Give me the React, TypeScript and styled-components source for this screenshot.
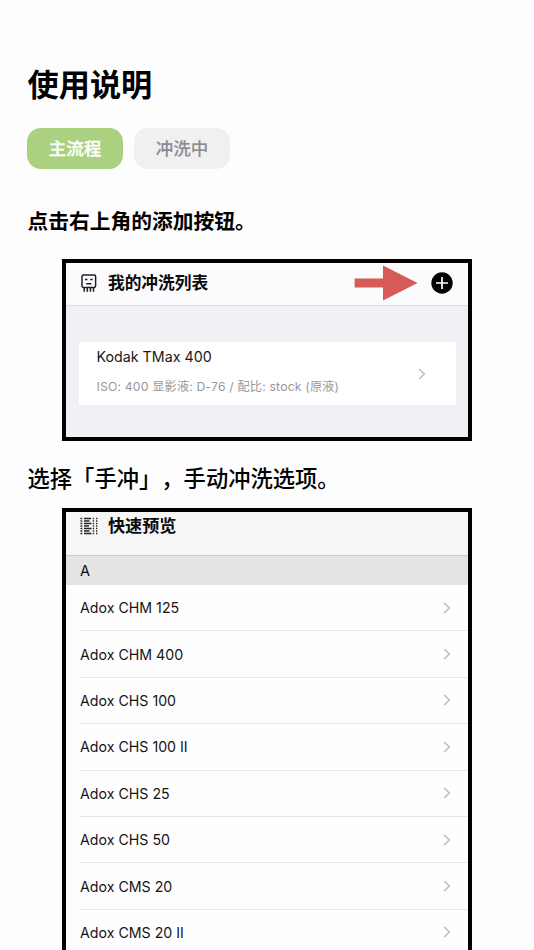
import React from "react";
import styled, { createGlobalStyle } from "styled-components";

const GlobalStyle = createGlobalStyle`
  * { box-sizing: border-box; }
  body {
    margin: 0;
    background: #fdfdfd;
    color: #0b0b0b;
    font-family: Inter, "Noto Sans CJK SC", sans-serif;
    text-spacing-trim: space-all;
    overflow: hidden;
  }
`;

const Page = styled.main`
  height: 950px;
  overflow: hidden;
  display: flex;
  flex-direction: column;
`;

const Title = styled.h1`
  margin: 61px 0 0 27.5px;
  font-size: 31.2px;
  line-height: 48px;
  font-weight: 600;
  color: #000;
`;

const Tabs = styled.nav`
  display: flex;
  gap: 11px;
  margin: 19px 0 0 27px;
`;

const Tab = styled.button<{ $active?: boolean }>`
  width: 96px;
  height: 41px;
  padding: 0;
  border: 0;
  border-radius: 14px;
  font: 500 17.5px/42px Inter, "Noto Sans CJK SC", sans-serif;
  -webkit-text-stroke: ${(p) => (p.$active ? 0.3 : 0.1)}px currentColor;
  background: ${(p) => (p.$active ? "#a9d180" : "#f0f0f0")};
  color: ${(p) => (p.$active ? "#fff" : "#8c8c90")};
`;

const Step = styled.p<{ $size: number; $weight: number; $top: number }>`
  margin: ${(p) => p.$top}px 0 0 27.5px;
  font-size: ${(p) => p.$size}px;
  font-weight: ${(p) => p.$weight};
  line-height: 32px;
  color: #000;
  white-space: nowrap;
`;

const Frame = styled.section<{ $top: number; $height: number; $bg: string }>`
  flex: none;
  width: 410px;
  height: ${(p) => p.$height}px;
  margin: ${(p) => p.$top}px 0 0 62px;
  border: 4px solid #000;
  background: ${(p) => p.$bg};
  overflow: hidden;
`;

const Header = styled.header<{ $preview?: boolean }>`
  display: flex;
  align-items: center;
  height: ${(p) => (p.$preview ? 44 : 43)}px;
  padding: 0 15px ${(p) => (p.$preview ? 15 : 3)}px 14px;
  background: ${(p) => (p.$preview ? "#f6f6f6" : "#fbfbfd")};
  border-bottom: 1px solid ${(p) => (p.$preview ? "#cbcbcb" : "#dcdce0")};
`;

const HeaderTitle = styled.h2<{ $size: number }>`
  flex: 1;
  margin: 0 0 0 10px;
  font-size: ${(p) => p.$size}px;
  line-height: 26px;
  font-weight: 600;
`;

const Arrow = styled.svg`
  flex: none;
  margin: 1px 13px 0 0;
`;

const Card = styled.article`
  display: flex;
  align-items: center;
  justify-content: space-between;
  width: 376.5px;
  height: 63px;
  margin: 36px 0 0 13px;
  padding: 0 30px 0 17.5px;
  background: #fff;
`;

const FilmName = styled.div`
  margin-top: -3px;
  font-size: 14.25px;
  line-height: 30px;
  color: #181818;
`;

const Detail = styled.div`
  font-size: 12.2px;
  letter-spacing: 0.18px;
  line-height: 30px;
  color: #98989b;
  white-space: nowrap;
`;

const SectionLabel = styled.div`
  height: 29px;
  padding-left: 14px;
  font-size: 14.5px;
  line-height: 29px;
  background: #e4e4e4;
`;

const List = styled.ul`
  margin: 0;
  padding: 0 0 0 13px;
  list-style: none;
`;

const Row = styled.li`
  display: flex;
  align-items: center;
  justify-content: space-between;
  height: 46.4px;
  padding: 0 17px 0 1px;
  border-bottom: 1px solid #e6e6e8;
  font-size: 14.2px;
  color: #151515;
`;

const Chevron = () => (
  <svg width="8" height="12" viewBox="0 0 8 12" fill="none" stroke="#c0c0c2" strokeWidth="1.7">
    <path d="M1.2 1 L6.3 6 L1.2 11" />
  </svg>
);

const RobotIcon = () => (
  <svg width="18" height="20" viewBox="0 0 18 20" fill="none" stroke="#202024" strokeWidth="1.5">
    <rect x="2" y="2" width="13.6" height="12.4" rx="1.4" />
    <path d="M4.9 6.6h2.5M10.2 6.6h2.5M6.2 10.7h5.2M4.2 14.5v4.2M7.3 14.5v4.2M10.4 14.5v4.2M13.5 14.5v4.2" />
  </svg>
);

const LINE_ENDS = [11, 9.5, 11.5, 9, 11.5, 9.5, 11.5];

const PreviewIcon = () => (
  <svg width="18" height="18" viewBox="0 0 18 18" fill="none" stroke="#242424" strokeWidth="1.3">
    {LINE_ENDS.map((end, i) => {
      const y = 1.5 + i * 2.5;
      return (
        <path key={i} d={`M.5 ${y}h1.8M4 ${y}H${end}M12.8 ${y}h1.3M16 ${y}h1.3`} />
      );
    })}
  </svg>
);

const FILMS = [
  "Adox CHM 125",
  "Adox CHM 400",
  "Adox CHS 100",
  "Adox CHS 100 II",
  "Adox CHS 25",
  "Adox CHS 50",
  "Adox CMS 20",
  "Adox CMS 20 II",
];

export default function App() {
  return (
    <Page>
      <GlobalStyle />
      <Title>使用说明</Title>
      <Tabs>
        <Tab $active>主流程</Tab>
        <Tab>冲洗中</Tab>
      </Tabs>
      <Step $size={20.75} $weight={600} $top={37}>点击右上角的添加按钮。</Step>
      <Frame $top={21} $height={182} $bg="#f1f0f5">
        <Header>
          <RobotIcon />
          <HeaderTitle $size={16.7}>我的冲洗列表</HeaderTitle>
          <Arrow width="64" height="36" viewBox="0 0 64 36" fill="#d65a55">
            <path d="M.6 13.5H29V.5L63.6 18 29 35.5v-13H.6z" />
          </Arrow>
          <svg width="22" height="22" viewBox="0 0 22 22">
            <circle cx="11" cy="11" r="10.7" fill="#000" />
            <path d="M11 5v12M5 11h12" stroke="#fff" strokeWidth="1.7" />
          </svg>
        </Header>
        <Card>
          <div>
            <FilmName>Kodak TMax 400</FilmName>
            <Detail>ISO: 400 显影液: D-76 / 配比: stock (原液)</Detail>
          </div>
          <Chevron />
        </Card>
      </Frame>
      <Step $size={22.3} $weight={500} $top={22}>选择「手冲」，手动冲洗选项。</Step>
      <Frame $top={13} $height={460} $bg="#fefefe">
        <Header $preview>
          <PreviewIcon />
          <HeaderTitle $size={17.1}>快速预览</HeaderTitle>
        </Header>
        <SectionLabel>A</SectionLabel>
        <List>
          {FILMS.map((name) => (
            <Row key={name}>
              {name}
              <Chevron />
            </Row>
          ))}
        </List>
      </Frame>
    </Page>
  );
}
